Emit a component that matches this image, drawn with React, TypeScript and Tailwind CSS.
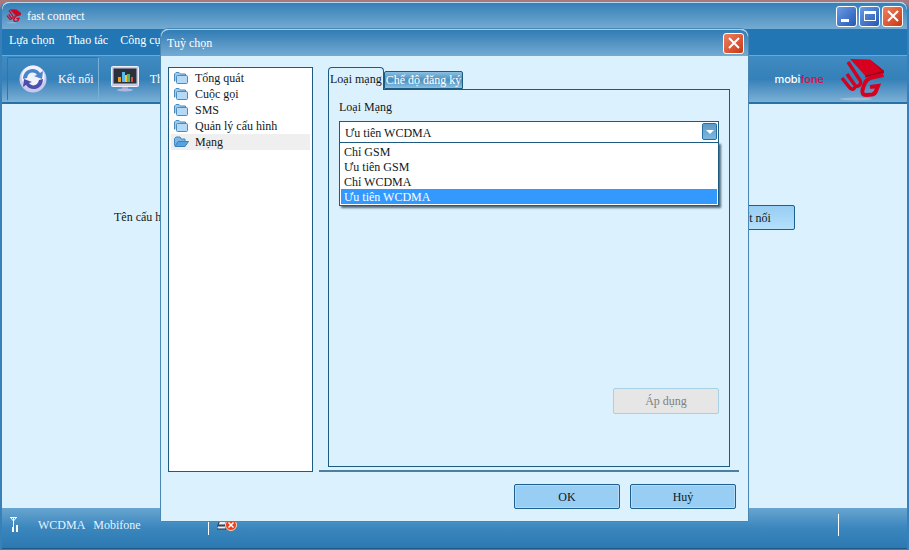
import { useState } from 'react';

const menus = ['Lựa chọn', 'Thao tác', 'Công cụ'];
const categories = ['Tổng quát', 'Cuộc gọi', 'SMS', 'Quản lý cấu hình', 'Mạng'];
const networks = ['Chỉ GSM', 'Ưu tiên GSM', 'Chỉ WCDMA', 'Ưu tiên WCDMA'];
const tabs = ['Loại mạng', 'Chế độ đăng ký'];

function CubeLogo({ className }: { className: string }) {
  return (
    <svg className={className} viewBox="0 0 54 48" aria-hidden="true">
      <ellipse cx="20" cy="44" rx="16" ry="1.5" fill="#9dbcd6" />
      <path d="M14 4 34 4.500 48 16 29 20.500Z" fill="#d8001f" />
      <path d="M34 4.500 48 16 48 18 29 22.500 29 20.500 46 16Z" fill="#a80018" />
      <path
        d="M6 23 14 33Q18 36 19.500 31L11 19M19.500 31Q25 32 24.500 26L12 7"
        fill="none"
        stroke="#d4001e"
        strokeWidth="3.500"
      />
      <path
        d="M47.500 20 36 22.500Q30 24 28 30L26.500 35Q25.500 40 30 40L36 39.500Q39 39 40 36L42 31 34 32"
        fill="none"
        stroke="#d8001f"
        strokeWidth="4"
      />
    </svg>
  );
}

function SyncIcon() {
  return (
    <svg className="size-7" viewBox="0 0 28 28" aria-hidden="true">
      <circle cx="14" cy="14" r="13.5" fill="#c9c9ee" />
      <circle cx="14" cy="12" r="11.5" fill="#f2f2fc" />
      <path d="M4 14C4 3 17 1 21 8L24 6 23 14 15 11 18 10C15 6 9 7 8 13Z" fill="#4a86cc" />
      <path d="M24 14C24 25 11 27 7 20L4 22 5 14 13 17 10 18C13 22 19 21 20 15Z" fill="#4a4fae" />
    </svg>
  );
}

function MonitorIcon() {
  return (
    <svg className="h-7 w-7" viewBox="0 0 28 28" aria-hidden="true">
      <rect x="0.5" y="1.5" width="27" height="20" rx="1" fill="#c9cbe2" stroke="#eef0fa" />
      <rect x="2.500" y="3.500" width="23" height="15" fill="#2c2f3c" />
      <path d="M7 12h3v5H7z" fill="#f0a020" />
      <path d="M11 7h3v10h-3z" fill="#58b8e8" />
      <path d="M14 10h2v7h-2z" fill="#f4c430" />
      <path d="M16 9h3v8h-3z" fill="#5cb860" />
      <path d="M20 12h2v5h-2z" fill="#e05030" />
      <path d="M11 22h6v2h-6z" fill="#9fa6cc" />
      <ellipse cx="14" cy="25" rx="8" ry="1.5" fill="#b0b8e0" />
    </svg>
  );
}

function FolderIcon({ open }: { open: boolean }) {
  return (
    <svg className="h-3 w-[15px]" viewBox="0 0 15 12" aria-hidden="true">
      {open ? (
        <>
          <path d="M.5 9.500V2.500L2 1H6L7 3H11V6" fill="#7db8e6" stroke="#3f86c0" />
          <path d="M1 10.500 4 5.500H14.500L11 10.500Z" fill="#5aa2dc" stroke="#3a80bc" />
        </>
      ) : (
        <>
          <path d="M.5 9.500V2L2 .5H5L6.500 2H11.500V4" fill="#9ccbee" stroke="#4b8cbd" />
          <rect x="2.500" y="3.500" width="11" height="8" rx="1" fill="#b4daf6" stroke="#4b8cbd" />
        </>
      )}
    </svg>
  );
}

function CloseButton({ label }: { label: string }) {
  return (
    <button
      type="button"
      aria-label={label}
      className="flex size-[21px] items-center justify-center rounded-[3px] border border-white bg-linear-to-br from-[#ee8060] to-[#c8350c]"
    >
      <svg className="size-3" viewBox="0 0 12 12" aria-hidden="true">
        <path d="M1 1 11 11M11 1 1 11" stroke="white" strokeWidth="2" />
      </svg>
    </button>
  );
}

function TitleBar() {
  return (
    <header className="flex h-[27px] shrink-0 items-center gap-1 rounded-t-lg border-t border-[#b4d8ee] bg-linear-to-b from-[#3480b7] to-[#74abd3] pr-1 pl-[3px]">
      <CubeLogo className="h-4 w-[18px]" />
      <h1 className="grow text-white">fast connect</h1>
      <div className="flex gap-0.5 pl-0.5">
        <button
          type="button"
          aria-label="Thu nhỏ"
          className="flex size-[21px] items-end rounded-[3px] border border-white bg-linear-to-br from-[#6b9be4] to-[#2458b4] p-1"
        >
          <span className="h-[3px] w-2 bg-white" />
        </button>
        <button
          type="button"
          aria-label="Phóng to"
          className="flex size-[21px] items-center justify-center rounded-[3px] border border-white bg-linear-to-br from-[#6b9be4] to-[#2458b4]"
        >
          <span className="h-[10px] w-3 border border-t-[3px] border-white" />
        </button>
        <CloseButton label="Thoát" />
      </div>
    </header>
  );
}

function Toolbar() {
  return (
    <div className="flex h-[49px] shrink-0 items-center border-t border-b-2 border-t-[#6fa9d2] border-b-[#2870a8] bg-linear-to-b from-[#3f8bc2] via-[#3480b8] to-[#7bb0d6] px-[5px] text-white">
      <button
        type="button"
        className="flex h-11 items-center gap-[11px] rounded-xs border border-[#2b76ae] border-r-[#78b0d8] border-b-[#78b0d8] pr-1 pl-[11px]"
      >
        <SyncIcon />
        Kết nối
      </button>
      <button type="button" className="flex h-11 items-center gap-[11px] px-3">
        <MonitorIcon />
        Thống kê
      </button>
      <div className="ml-auto flex items-center gap-3 pr-3">
        <span className="font-['Inter',sans-serif] text-[11px] font-medium">
          mobi<span className="text-[#d8103c]">fone</span>
        </span>
        <CubeLogo className="h-12 w-[54px]" />
      </div>
    </div>
  );
}

function StatusBar() {
  return (
    <footer className="flex h-[41px] shrink-0 items-center border-b border-[#1c5a8c] bg-linear-to-b from-[#68a5d0] via-[#3a86bd] to-[#2c79b2] px-2 pb-1.5 text-[#e4f4ff]">
      <svg className="h-4 w-[10px]" viewBox="0 0 10 16" aria-hidden="true">
        <path d="M0 .5H7M1 1 3.500 4 6 1M3.500 0V15" fill="none" stroke="white" />
        <path d="M2 10h2v5H2zM6 8h2v7H6z" fill="white" />
      </svg>
      <p className="flex w-[189px] gap-2 border-r border-white py-0.5 pl-[18px]">
        <span>WCDMA</span>
        <span>Mobifone</span>
      </p>
      <svg className="ml-2 h-3 w-5" viewBox="0 0 20 12" aria-hidden="true">
        <path d="M3 1H10L8 6H1ZM0 7H9V10H0Z" fill="#e8eef4" stroke="#22384c" />
        <circle cx="14" cy="6" r="5.500" fill="#e8401c" stroke="#ffd8b0" />
        <path d="M11.500 3.500 16.500 8.500M16.500 3.500 11.500 8.500" stroke="white" strokeWidth="1.500" />
      </svg>
      <span className="mr-[60px] ml-auto h-[22px] w-px bg-white" />
    </footer>
  );
}

function NetworkPicker() {
  const [network, setNetwork] = useState('Ưu tiên WCDMA');

  return (
    <div className="relative">
      <select
        id="network"
        value={network}
        onChange={(e) => setNetwork(e.target.value)}
        className="block h-[22px] w-full appearance-none border border-[#1d5b80] bg-white px-[5px] pt-0.5 outline-none"
      >
        {networks.map((name) => (
          <option key={name}>{name}</option>
        ))}
      </select>
      <span className="pointer-events-none absolute top-[2px] right-[2px] flex h-[17px] w-[15px] items-center justify-center rounded-xs border border-[#2a6f9f] bg-linear-to-b from-[#5a9cc8] to-[#7db8de]">
        <svg className="h-1 w-2" viewBox="0 0 8 4" aria-hidden="true">
          <path d="M0 0H8L4 4Z" fill="white" />
        </svg>
      </span>
      <ul
        role="listbox"
        aria-label="Loại Mạng"
        className="absolute inset-x-0 top-[21px] border border-[#1d5b80] bg-white p-px shadow-[2px_2px_2px_rgba(20,50,70,0.7)]"
      >
        {networks.map((name) => (
          <li
            key={name}
            role="option"
            aria-selected={name === network}
            onClick={() => setNetwork(name)}
            className={`h-[15px] px-[3px] leading-[16px] ${name === network ? 'bg-[#3399ff] text-white' : ''}`}
          >
            {name}
          </li>
        ))}
      </ul>
    </div>
  );
}

function OptionsDialog() {
  const [category, setCategory] = useState('Mạng');
  const [tab, setTab] = useState('Loại mạng');

  return (
    <section
      role="dialog"
      aria-label="Tuỳ chọn"
      className="flex h-[494px] w-[589px] flex-col rounded-t-lg border border-[#4a86b4] bg-[#dcf1fe]"
    >
      <header className="flex h-[27px] shrink-0 items-center justify-between rounded-t-lg border-t border-[#a8d0ea] bg-linear-to-b from-[#2f7cb4] to-[#74abd3] pr-1 pl-1.5">
        <h2 className="text-white">Tuỳ chọn</h2>
        <CloseButton label="Đóng" />
      </header>
      <div className="flex min-h-0 grow gap-1.5 pt-[11px] pl-[7px]">
        <nav className="mb-[49px] w-[145px] shrink-0 border border-[#1d5b80] bg-white p-0.5">
          {categories.map((name) => (
            <button
              key={name}
              type="button"
              onClick={() => setCategory(name)}
              className={`flex h-4 w-full items-center gap-1.5 pl-[3px] ${name === category ? 'bg-[#efefef]' : ''}`}
            >
              <FolderIcon open={name === category} />
              {name}
            </button>
          ))}
        </nav>
        <div className="flex grow flex-col pr-[9px]">
          <div className="flex grow flex-col border-b-2 border-[#4f7f9f] px-[9px] pb-[3px]">
            <div role="tablist" className="flex items-end">
              {tabs.map((name) => (
                <button
                  key={name}
                  type="button"
                  role="tab"
                  aria-selected={name === tab}
                  onClick={() => setTab(name)}
                  className={
                    name === tab
                      ? 'relative -mb-px h-[23px] rounded-t border border-b-0 border-[#1d5b80] bg-[#dcf1fe] px-px'
                      : 'h-[18px] rounded-t-xs border border-[#1d5b80] bg-linear-to-b from-[#8cc0e2] via-[#4a8fbf] to-[#8cc0e2] px-px leading-[14px] text-white'
                  }
                >
                  {name}
                </button>
              ))}
            </div>
            <div className="flex grow flex-col gap-1.5 border border-[#1d5b80] px-[10px] pt-[9px] pb-[52px]">
              <label htmlFor="network">Loại Mạng</label>
              <NetworkPicker />
              <button
                type="button"
                disabled
                className="mt-auto h-[26px] w-[106px] self-end rounded-xs border border-[#a8d0e4] bg-[#e6e6e6] text-[#808080]"
              >
                Áp dụng
              </button>
            </div>
          </div>
          <div className="flex justify-end gap-2.5 pt-3 pr-[3px] pb-3">
            {['OK', 'Huỷ'].map((name) => (
              <button
                key={name}
                type="button"
                className="h-[25px] w-[106px] rounded-xs border border-[#1d5f90] bg-[#98cdf4] shadow-[inset_0_0_0_1px_#b4dcf8]"
              >
                {name}
              </button>
            ))}
          </div>
        </div>
      </div>
    </section>
  );
}

export default function App() {
  return (
    <div className="relative flex h-screen flex-col bg-[#a8787c] pt-0.5 font-['Liberation_Serif',serif] text-[12px] leading-[16px] text-[#101820]">
      <div className="flex grow flex-col rounded-t-lg border-x-2 border-b border-[#3a80b8] bg-[#dcf1fe]">
        <TitleBar />
        <nav className="flex h-[26px] shrink-0 items-center gap-3 bg-[#2276b3] px-[7px] pb-1 text-white">
          {menus.map((name) => (
            <button key={name} type="button">
              {name}
            </button>
          ))}
        </nav>
        <Toolbar />
        <main className="flex grow items-start justify-between px-28 pt-[101px]">
          <p className="pt-1">Tên cấu hình</p>
          <button
            type="button"
            className="h-[25px] w-[84px] rounded-xs border border-[#1d5f90] bg-linear-to-b from-[#98cdf4] to-[#b4e0fa]"
          >
            Kết nối
          </button>
        </main>
        <StatusBar />
      </div>
      <div className="absolute inset-0 flex items-center justify-center">
        <OptionsDialog />
      </div>
    </div>
  );
}
